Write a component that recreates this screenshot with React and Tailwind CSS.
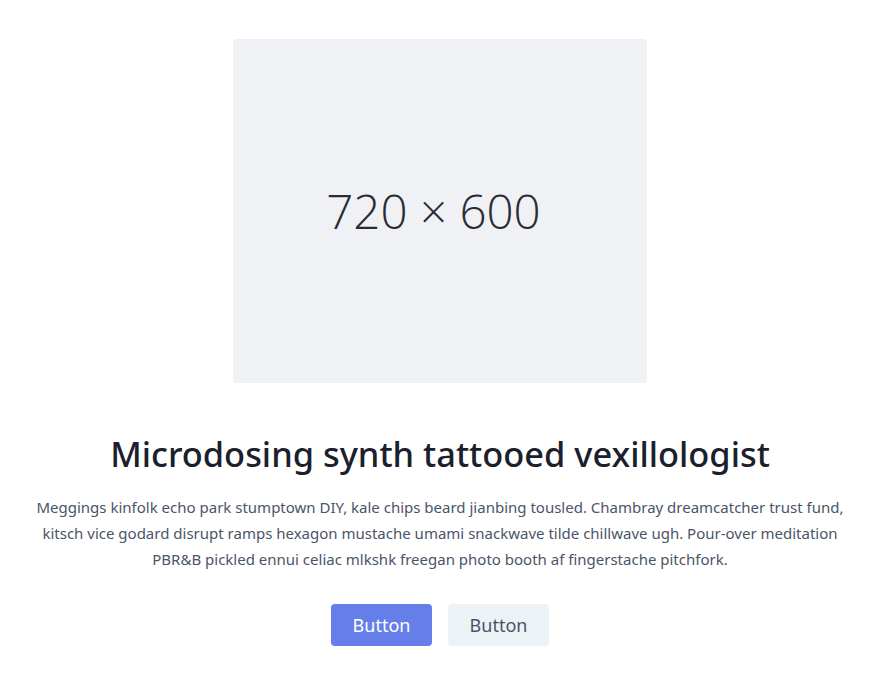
export default function App() {
  return (
    <section className="bg-white font-['Noto_Sans',sans-serif] text-[#4a5568]">
      <div className="mx-auto flex flex-col items-center pl-[17px] pr-[23px] pt-[39px] pb-8">
        <div className="mb-[47px] flex h-[344px] w-[414px] items-center justify-center rounded bg-[#eff1f5]">
          <span className="mr-[13px] font-['Open_Sans',sans-serif] text-[47.5px] font-light text-[#2b2b33]">
            720 × 600
          </span>
        </div>
        <div className="flex w-full flex-col items-center text-center">
          <h1 className="mb-4 text-[34.4px] font-medium leading-[48px] text-[#1a202c]">
            Microdosing synth tattooed vexillologist
          </h1>
          <p className="mb-8 text-[15px] leading-[26px]">
            Meggings kinfolk echo park stumptown DIY, kale chips beard jianbing tousled. Chambray dreamcatcher trust fund,
            <br />
            kitsch vice godard disrupt ramps hexagon mustache umami snackwave tilde chillwave ugh. Pour-over meditation
            <br />
            PBR&amp;B pickled ennui celiac mlkshk freegan photo booth af fingerstache pitchfork.
          </p>
          <div className="flex justify-center gap-4">
            <button className="h-[42px] w-[101px] rounded bg-[#667eea] text-lg text-white">
              Button
            </button>
            <button className="h-[42px] w-[101px] rounded bg-[#edf2f7] text-lg text-[#4a5568]">
              Button
            </button>
          </div>
        </div>
      </div>
    </section>
  )
}
